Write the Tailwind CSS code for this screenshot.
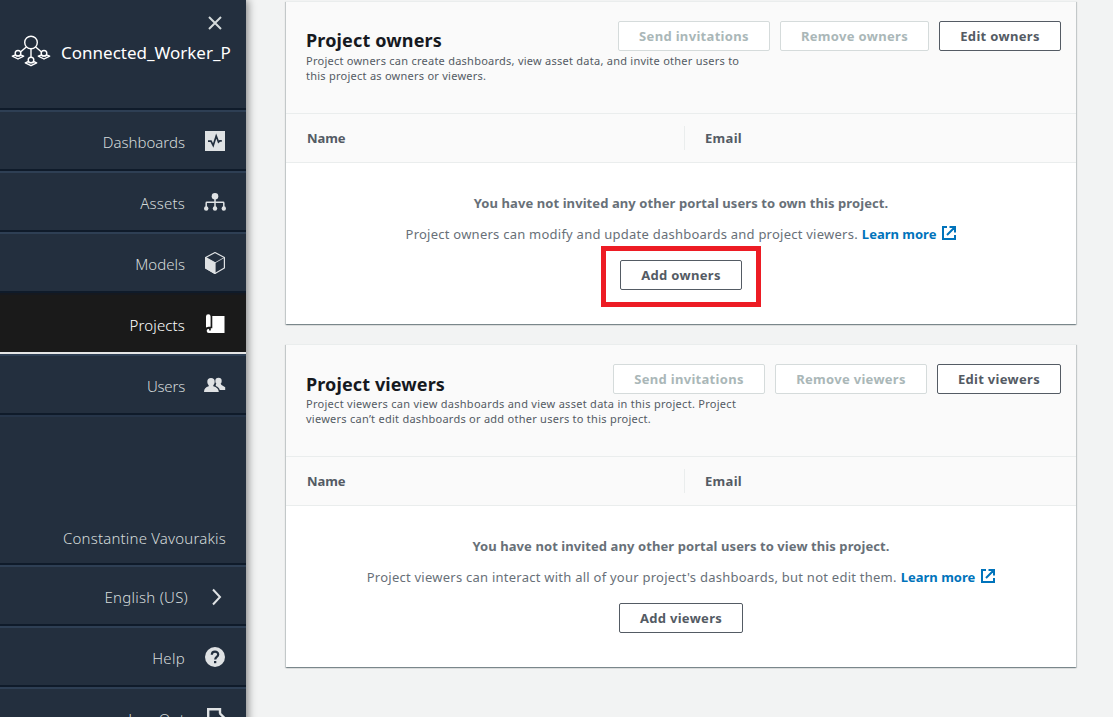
<!DOCTYPE html>
<html lang="en">
<head>
<meta charset="utf-8">
<title>Projects</title>
<script src="https://cdn.jsdelivr.net/npm/@tailwindcss/browser@4"></script>
</head>
<body class="h-[717px] overflow-hidden bg-[#f2f3f3] font-['Noto_Sans','Open_Sans',sans-serif]">
<div class="flex h-full">

  <aside class="relative z-10 flex h-[748px] w-[246px] shrink-0 flex-col bg-[#232f3e] text-[15px] font-light text-[#d5dbdb] shadow-[2px_0_8px_0_rgba(0,0,0,0.45)]">
    <header class="flex h-[110px] shrink-0 flex-col border-b-2 border-[#0f1b2a]">
      <button class="mt-4 mr-6 flex self-end" aria-label="Close">
        <svg class="size-[14px]" viewBox="0 0 14 14" fill="none" stroke="#d5dbdb" stroke-width="2"><path d="M1 1l12 12M13 1L1 13"/></svg>
      </button>
      <div class="mt-[3px] flex items-center gap-[9px] pl-[11px]">
        <svg class="h-[34px] w-[41px] shrink-0" viewBox="0 0 41 34" fill="none" stroke="#fff" stroke-width="1.4" stroke-linejoin="round">
          <circle cx="20" cy="9.5" r="6.3"/>
          <path d="M15.3 14L9.5 19M24.7 14l5.8 5M20 16v8"/>
          <circle cx="7" cy="20.3" r="2.8"/><circle cx="33" cy="20.3" r="2.8"/><circle cx="20" cy="27" r="2.8"/>
          <path d="M4.5 21.8L1.3 23.1 7 26l5.7-2.9-3.2-1.3M4.700 22.900h4.600M30.500 21.800l-3.200 1.300L33 26l5.700-2.900-3.200-1.300M30.700 22.900h4.600M17.500 28.500l-3.200 1.300 5.700 2.900 5.700-2.900-3.200-1.300M17.700 29.600h4.600"/>
        </svg>
        <span class="relative top-[3px] text-[17px] font-normal whitespace-nowrap text-white">Connected_Worker_P</span>
      </div>
    </header>

    <nav class="flex flex-col">
      <a class="flex h-[61px] items-center justify-end gap-[18px] border-t-2 border-b-2 border-t-[#2e3f54] border-b-[#0f1b2a] pr-[19px]">
        <span class="pt-[3px]">Dashboards</span>
        <svg class="size-6" viewBox="0 0 24 24"><path fill="#dfe2e4" d="M2 2h20v20H2z"/><path d="M5 12.200h3l2.200 4.300 3-9.500 2.300 6 1.300-1.200h2" fill="none" stroke="#232f3e" stroke-width="1.700"/></svg>
      </a>
      <a class="flex h-[61px] items-center justify-end gap-[18px] border-t-2 border-b-2 border-t-[#2e3f54] border-b-[#0f1b2a] pr-[19px]">
        <span class="pt-[3px] tracking-[0.2px]">Assets</span>
        <svg class="size-6" viewBox="0 0 24 24" fill="#dfe2e4"><circle cx="12" cy="6.200" r="3.300"/><circle cx="3.200" cy="18.500" r="2.200"/><circle cx="12" cy="18.500" r="2.200"/><circle cx="20.800" cy="18.500" r="2.200"/><path d="M12 8v10M3.200 18v-5q0-.7.7-.7h16.200q.7 0 .7.7v5" fill="none" stroke="#dfe2e4" stroke-width="1.500"/></svg>
      </a>
      <a class="flex h-[61px] items-center justify-end gap-[18px] border-t-2 border-b-2 border-t-[#2e3f54] border-b-[#0f1b2a] pr-[19px]">
        <span class="pt-[3px]">Models</span>
        <svg class="size-6" viewBox="0 0 24 24" fill="none" stroke="#dfe2e4" stroke-width="1.200" stroke-linejoin="round"><path d="M12 1.500l9.400 5v10.400L12 22.400l-9.400-5.500V6.500z"/><path d="M2.600 6.500L12 11.800v10.600l-9.400-5.500z" fill="#dfe2e4"/><path d="M12 11.800l9.400-5.300" stroke-width=".8"/></svg>
      </a>
      <a class="flex h-[61px] items-center justify-end gap-[18px] border-t-2 border-b-2 border-t-[#16191f] border-b-[#e6e6e6] bg-[#1a1a1a] pr-[19px] text-white">
        <span class="pt-[3px] tracking-[0.14px]">Projects</span>
        <svg class="size-6" viewBox="0 0 24 24" fill="#fff"><path d="M3 4.500a2.300 2.300 0 0 1 4.600 0v10.300H5.500L3 15.500zM9.300 4h12.200v17H5.800a2.100 2.100 0 0 1-2.100-2.100c0-1.500 1.200-2.200 2.400-2.200v1.700h1.700v-2.200h1.500z"/></svg>
      </a>
      <a class="flex h-[61px] items-center justify-end gap-[18px] border-t-2 border-b-2 border-t-[#2e3f54] border-b-[#0f1b2a] pr-[19px]">
        <span class="pt-[3px] tracking-[-0.2px]">Users</span>
        <svg class="size-6" viewBox="0 0 24 24" fill="#dfe2e4"><circle cx="15.500" cy="8" r="3.200"/><path d="M13 10.500h5l.2 1.300 4 2.500v2.600h-5.500c-.3-1.600-1.500-2.700-4-3.800z"/><path d="M8 5a3.700 3.700 0 0 1 3.700 3.700c0 1.500-.6 2.700-1.400 3.500v1c3.300.8 5.300 2.300 5.500 5.800H1c0-3.500 1.800-5 4.700-5.800v-1C4.900 11.400 4.300 10.200 4.300 8.700A3.700 3.700 0 0 1 8 5z"/></svg>
      </a>
    </nav>

    <div class="flex h-[150px] shrink-0 items-end justify-end border-t-2 border-b-2 border-t-[#263549] border-b-[#0f1b2a] pr-5 pb-[14px]">
      <span class="leading-[22px] tracking-[0.19px]">Constantine Vavourakis</span>
    </div>
    <a class="flex h-[61px] shrink-0 items-center justify-end gap-[15px] border-t-2 border-b-2 border-t-[#2e3f54] border-b-[#0f1b2a] pr-[19px]">
      <span class="pt-[3px] tracking-[0.25px]">English (US)</span>
      <svg class="size-6" viewBox="0 0 24 24" fill="none" stroke="#dfe2e4" stroke-width="2"><path d="M10 5.500l7 7.500-7 7.500"/></svg>
    </a>
    <a class="flex h-[61px] shrink-0 items-center justify-end gap-[18px] border-t-2 border-b-2 border-t-[#2e3f54] border-b-[#0f1b2a] pr-[19px]">
      <span class="pt-[3px] tracking-[0.3px]">Help</span>
      <svg class="size-6" viewBox="0 0 24 24"><circle cx="12" cy="12" r="10" fill="#dfe2e4"/><path d="M8.800 9.800c0-4.200 6.400-4 6.400-.4 0 2.400-3 2.500-3 5" fill="none" stroke="#232f3e" stroke-width="2.200"/><path d="M11 16h2.300v2.200H11z" fill="#232f3e"/></svg>
    </a>
    <a class="flex h-[61px] shrink-0 items-center justify-end gap-[18px] border-t-2 border-b-2 border-t-[#2e3f54] border-b-[#0f1b2a] pr-[19px]">
      <span class="pt-[3px] tracking-[0.25px]">Log Out</span>
      <svg class="size-6" viewBox="0 0 24 24" fill="none" stroke="#dfe2e4" stroke-width="2.400"><path d="M17 7V3.200H5.200v17.600H17v-3M10 12.500h11M16.500 7l5.500 5.500-5.500 5"/></svg>
    </a>
  </aside>

  <main class="flex flex-1 flex-col gap-5 pt-px pl-10">
    <section class="flex h-[323px] w-[790px] flex-col border-t border-[#eaeded] bg-white shadow-[0_1px_1px_0_rgba(0,28,36,0.3),1px_1px_1px_0_rgba(0,28,36,0.15),-1px_1px_1px_0_rgba(0,28,36,0.15)]">
      <div class="relative flex h-[112px] shrink-0 border-b border-[#eaeded] bg-[#fafafa] pl-5">
        <div class="pt-[25px]">
          <h2 class="text-[18px] leading-[26px] font-bold tracking-[0.15px] text-[#16191f]">Project owners</h2>
          <p class="text-[11px] leading-[15px] tracking-[0.25px] whitespace-nowrap text-[#545b64]">Project owners can create dashboards, view asset data, and invite other users to<br>this project as owners or viewers.</p>
        </div>
        <div class="absolute top-[19px] right-[15px] flex gap-[10px] text-[13px] font-bold tracking-[0.32px]">
          <button class="h-[30px] w-[152px] rounded-[2px] border border-[#d5dbdb] bg-white pt-[2px] text-[#aab7b8]">Send invitations</button>
          <button class="h-[30px] w-[149px] rounded-[2px] border border-[#d5dbdb] bg-white pt-[2px] text-[#aab7b8]">Remove owners</button>
          <button class="h-[30px] w-[122px] rounded-[2px] border border-[#545b64] bg-white pt-[2px] text-[#545b64]">Edit owners</button>
        </div>
      </div>
      <div class="flex h-[49px] shrink-0 items-center border-b border-[#eaeded] bg-[#fafafa] pl-[21px] text-[13px] font-bold text-[#545b64]">
        <span class="w-[377px] pt-[2px] tracking-[-0.1px]">Name</span>
        <span class="flex h-6 items-center border-l border-[#eaeded] pt-[2px] pl-5 tracking-[0.3px]">Email</span>
      </div>
      <div class="flex flex-col items-center pt-[30px] text-[13px] leading-5 text-[#687078]">
        <p class="font-bold tracking-[0.08px]">You have not invited any other portal users to own this project.</p>
        <p class="mt-[11px] flex items-center whitespace-nowrap"><span class="tracking-[0.24px]">Project owners can modify and update dashboards and project viewers.</span><a class="ml-1 flex items-center gap-[6px] font-bold text-[#0073bb]">Learn more
          <svg class="-mt-[3px] size-[14px]" viewBox="0 0 14 14" fill="none" stroke="#0073bb" stroke-width="2"><path d="M5 1H1v12h12V9M7.500 1H13v5.500M13 1L5 9"/></svg></a></p>
        <div class="mt-[2px] flex h-[61px] w-[160px] items-center justify-center border-[5px] border-[#ed1c24] pb-[3px]">
          <button class="h-[30px] w-[122px] rounded-[2px] border border-[#545b64] bg-white font-bold tracking-[0.32px] text-[#545b64]">Add owners</button>
        </div>
      </div>
    </section>

    <section class="flex h-[323px] w-[790px] flex-col border-t border-[#eaeded] bg-white shadow-[0_1px_1px_0_rgba(0,28,36,0.3),1px_1px_1px_0_rgba(0,28,36,0.15),-1px_1px_1px_0_rgba(0,28,36,0.15)]">
      <div class="relative flex h-[112px] shrink-0 border-b border-[#eaeded] bg-[#fafafa] pl-5">
        <div class="pt-[27px]">
          <h2 class="text-[18px] leading-6 font-bold tracking-[0.11px] text-[#16191f]">Project viewers</h2>
          <p class="text-[11px] leading-[15px] tracking-[0.28px] whitespace-nowrap text-[#545b64]">Project viewers can view dashboards and view asset data in this project. Project<br><span class="tracking-[0.26px]">viewers can’t edit dashboards or add other users to this project.</span></p>
        </div>
        <div class="absolute top-[19px] right-[15px] flex gap-[10px] text-[13px] font-bold tracking-[0.3px]">
          <button class="h-[30px] w-[152px] rounded-[2px] border border-[#d5dbdb] bg-white pt-[2px] text-[#aab7b8]">Send invitations</button>
          <button class="h-[30px] w-[152px] rounded-[2px] border border-[#d5dbdb] bg-white pt-[2px] text-[#aab7b8]">Remove viewers</button>
          <button class="h-[30px] w-[124px] rounded-[2px] border border-[#545b64] bg-white pt-[2px] text-[#545b64]">Edit viewers</button>
        </div>
      </div>
      <div class="flex h-[49px] shrink-0 items-center border-b border-[#eaeded] bg-[#fafafa] pl-[21px] text-[13px] font-bold text-[#545b64]">
        <span class="w-[377px] pt-[2px] tracking-[-0.1px]">Name</span>
        <span class="flex h-6 items-center border-l border-[#eaeded] pt-[2px] pl-5 tracking-[0.3px]">Email</span>
      </div>
      <div class="flex flex-col items-center pt-[30px] text-[13px] leading-5 text-[#687078]">
        <p class="font-bold tracking-[0.08px]">You have not invited any other portal users to view this project.</p>
        <p class="mt-[11px] flex items-center whitespace-nowrap"><span class="tracking-[0.245px]">Project viewers can interact with all of your project's dashboards, but not edit them.</span><a class="ml-1 flex items-center gap-[6px] font-bold text-[#0073bb]">Learn more
          <svg class="-mt-[3px] size-[14px]" viewBox="0 0 14 14" fill="none" stroke="#0073bb" stroke-width="2"><path d="M5 1H1v12h12V9M7.500 1H13v5.500M13 1L5 9"/></svg></a></p>
        <button class="mt-4 h-[30px] w-[124px] rounded-[2px] border border-[#545b64] bg-white font-bold tracking-[0.3px] text-[#545b64]">Add viewers</button>
      </div>
    </section>
  </main>
</div>
</body>
</html>
